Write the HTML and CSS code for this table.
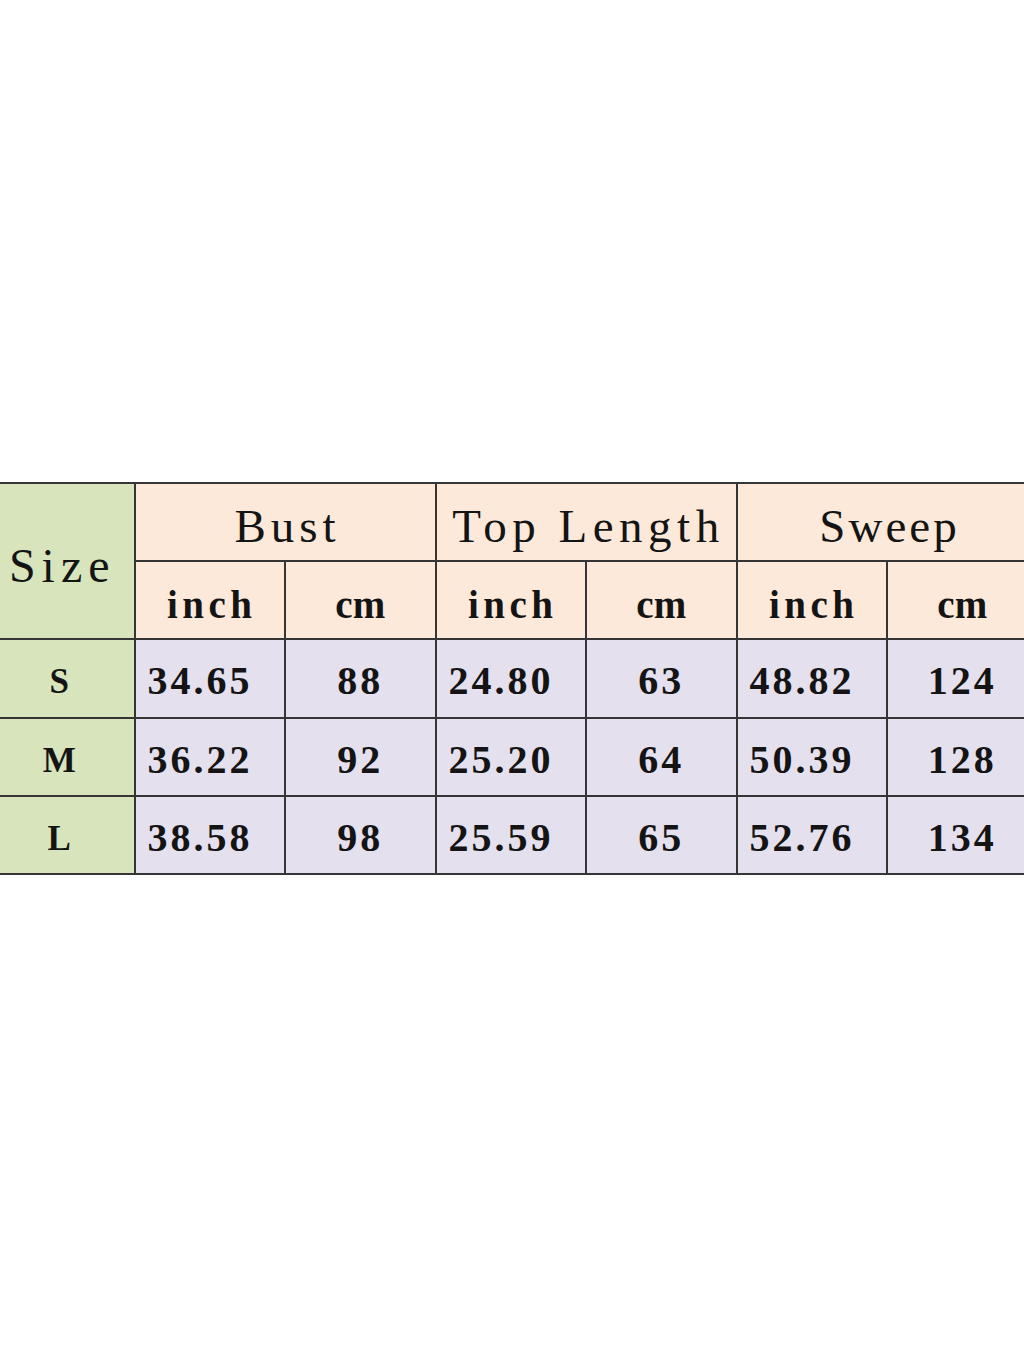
FILE: index.html
```html
<!DOCTYPE html>
<html lang="en">
<head>
<meta charset="utf-8">
<title>Size chart</title>
<link rel="stylesheet" href="styles.css">
</head>
<body>
<div class="page">
  <table class="chart">
    <colgroup>
      <col class="c"><col class="c"><col class="c"><col class="c"><col class="c"><col class="c"><col class="c">
    </colgroup>
    <thead>
      <tr class="r">
        <th rowspan="2" class="size head">Size</th>
        <th colspan="2" class="group">Bust</th>
        <th colspan="2" class="group wide">Top Length</th>
        <th colspan="2" class="group narrow">Sweep</th>
      </tr>
      <tr class="r">
        <th class="unit">inch</th><th class="unit cmu">cm</th>
        <th class="unit">inch</th><th class="unit cmu">cm</th>
        <th class="unit">inch</th><th class="unit cmu">cm</th>
      </tr>
    </thead>
    <tbody>
      <tr class="r">
        <td class="size">S</td>
        <td class="in">34.65</td><td class="cm">88</td>
        <td class="in">24.80</td><td class="cm">63</td>
        <td class="in">48.82</td><td class="cm">124</td>
      </tr>
      <tr class="r">
        <td class="size">M</td>
        <td class="in">36.22</td><td class="cm">92</td>
        <td class="in">25.20</td><td class="cm">64</td>
        <td class="in">50.39</td><td class="cm">128</td>
      </tr>
      <tr class="r">
        <td class="size">L</td>
        <td class="in">38.58</td><td class="cm">98</td>
        <td class="in">25.59</td><td class="cm">65</td>
        <td class="in">52.76</td><td class="cm">134</td>
      </tr>
    </tbody>
  </table>
</div>
</body>
</html>
```

FILE: styles.css
```css
html, body {
  margin: 0;
  padding: 0;
  background: #ffffff;
  overflow: hidden;
}

.page {
  width: 1024px;
  height: 1365px;
  padding-top: 482px;
  box-sizing: border-box;
  overflow: hidden;
}

.chart {
  border-collapse: collapse;
  table-layout: fixed;
  width: 1054px;
  margin-left: -17px;
  font-family: "Liberation Serif", "Times New Roman", serif;
  color: #141414;
}

.c {
  width: 150.5px;
}

.r {
  height: 78.2px;
}

.chart th,
.chart td {
  border: 2px solid #353535;
  padding: 0;
  text-align: center;
  vertical-align: top;
  line-height: 1;
}

.chart thead th {
  background: #fde9d9;
}

.chart tbody td {
  background: #e4e0ee;
}

.chart .size,
.chart thead .size {
  background: #d8e4bc;
}

.chart .group {
  font-size: 47px;
  font-weight: 400;
  letter-spacing: 5px;
  padding-top: 19px;
  padding-left: 5px;
}

.chart .group.wide {
  letter-spacing: 5.5px;
}

.chart .group.narrow {
  letter-spacing: 3px;
}

.chart .size.head {
  font-size: 48px;
  font-weight: 400;
  letter-spacing: 6px;
  padding-top: 58px;
  padding-left: 6px;
}

.chart .unit {
  font-size: 39px;
  font-weight: 700;
  letter-spacing: 4.5px;
  padding-top: 23px;
  padding-left: 4px;
}

.chart .unit.cmu {
  letter-spacing: 0;
  padding-left: 0;
}

.chart td {
  font-size: 40px;
  font-weight: 700;
  letter-spacing: 3px;
  padding-top: 21px;
}

.chart td.in {
  text-align: left;
  padding-left: 12px;
}

.chart td.size {
  font-size: 35px;
  padding-top: 24px;
  letter-spacing: 0;
}
```
